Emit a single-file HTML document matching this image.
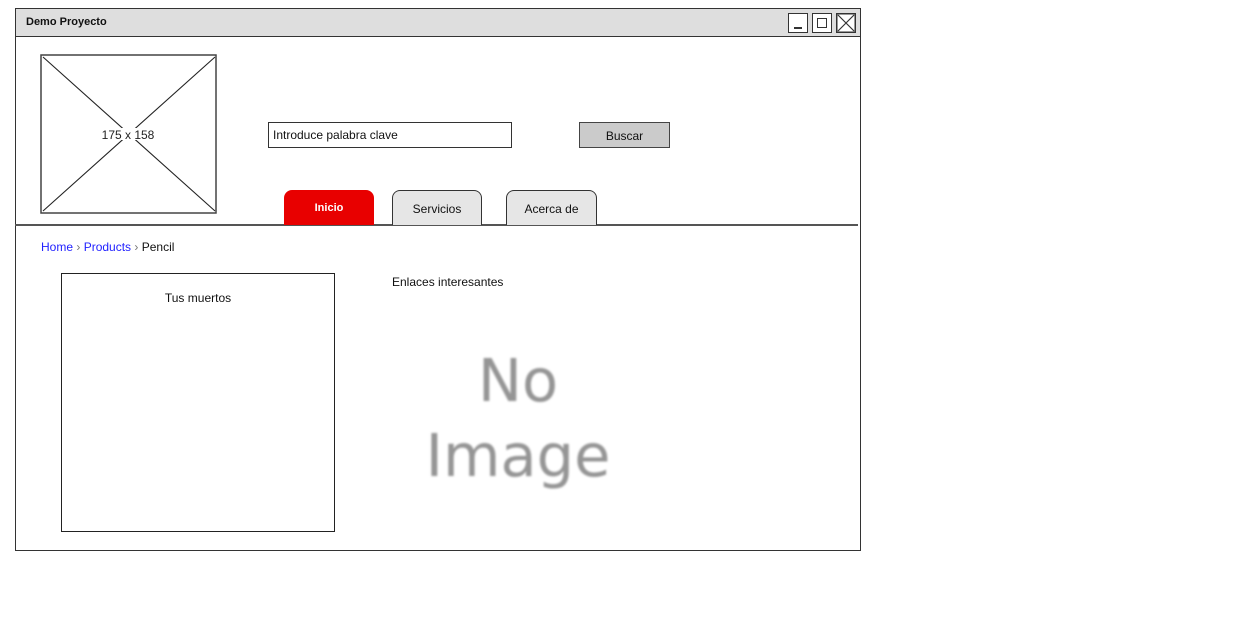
<!DOCTYPE html>
<html><head><style>
body{margin:0;width:1236px;height:632px;background:#fff;position:relative;font-family:"Comic Sans MS","Liberation Sans",sans-serif;font-size:12px;color:#111;overflow:hidden}
.a{position:absolute;box-sizing:border-box}
</style></head><body>
<div class="a" style="left:15px;top:8px;width:846px;height:543px;border:1.5px solid #333"></div>
<div class="a" style="left:15px;top:8px;width:846px;height:29px;background:#dedede;border:1.5px solid #333"></div>
<div class="a" style="left:26px;top:16px;font-weight:bold;font-size:11px">Demo Proyecto</div>
<div class="a" style="left:788px;top:13px;width:20px;height:20px;border:1.5px solid #333;background:#fff"><div class="a" style="left:5px;top:13px;width:8px;height:1.5px;background:#333"></div></div>
<div class="a" style="left:812px;top:13px;width:20px;height:20px;border:1.5px solid #333;background:#fff"><div class="a" style="left:4px;top:4px;width:10px;height:10px;border:1.5px solid #333"></div></div>
<svg class="a" style="left:836px;top:13px" width="20" height="20"><rect x="0.75" y="0.75" width="18.5" height="18.5" fill="#fff" stroke="#333" stroke-width="1.5"/><path d="M2 2L18 18M18 2L2 18" stroke="#333" stroke-width="1.2"/></svg>
<svg class="a" style="left:40px;top:54px" width="178" height="161"><rect x="1" y="1" width="175" height="158" fill="#fff" stroke="#444" stroke-width="1.5"/><path d="M3 3L175 157M175 3L3 157" stroke="#222" stroke-width="1.1"/><rect x="62" y="74" width="52" height="12" fill="#fff"/><text x="88" y="85" text-anchor="middle" font-family="Comic Sans MS, Liberation Sans, sans-serif" font-size="12" fill="#222">175 x 158</text></svg>
<div class="a" style="left:268px;top:122px;width:244px;height:26px;border:1.5px solid #333;padding:5px 0 0 4px">Introduce palabra clave</div>
<div class="a" style="left:579px;top:122px;width:91px;height:26px;border:1.5px solid #444;background:#cbcbcb;text-align:center;padding-top:6px">Buscar</div>
<div class="a" style="left:15px;top:224px;width:843px;height:1.5px;background:#555"></div>
<div class="a" style="left:284px;top:190px;width:90px;height:35px;background:#e80000;border-radius:8px 8px 0 0;color:#fff;font-weight:bold;font-size:11px;text-align:center;padding-top:12px">Inicio</div>
<div class="a" style="left:392px;top:190px;width:90px;height:35px;background:#e6e6e6;border:1.2px solid #333;border-bottom:none;border-radius:8px 8px 0 0;text-align:center;padding-top:11px">Servicios</div>
<div class="a" style="left:506px;top:190px;width:91px;height:35px;background:#e6e6e6;border:1.2px solid #333;border-bottom:none;border-radius:8px 8px 0 0;text-align:center;padding-top:11px">Acerca de</div>
<div class="a" style="left:41px;top:240px"><span style="color:#22f">Home</span> <span style="color:#777">›</span> <span style="color:#22f">Products</span> <span style="color:#777">›</span> Pencil</div>
<div class="a" style="left:61px;top:273px;width:274px;height:259px;border:1.2px solid #222"></div>
<div class="a" style="left:61px;top:291px;width:274px;text-align:center">Tus muertos</div>
<div class="a" style="left:392px;top:275px">Enlaces interesantes</div>
<div class="a" style="left:400px;top:343px;width:236px;text-align:center;font-family:'DejaVu Sans',sans-serif;font-size:59px;line-height:75px;color:#959595;filter:blur(1px)">No<br>Image</div>
</body></html>
